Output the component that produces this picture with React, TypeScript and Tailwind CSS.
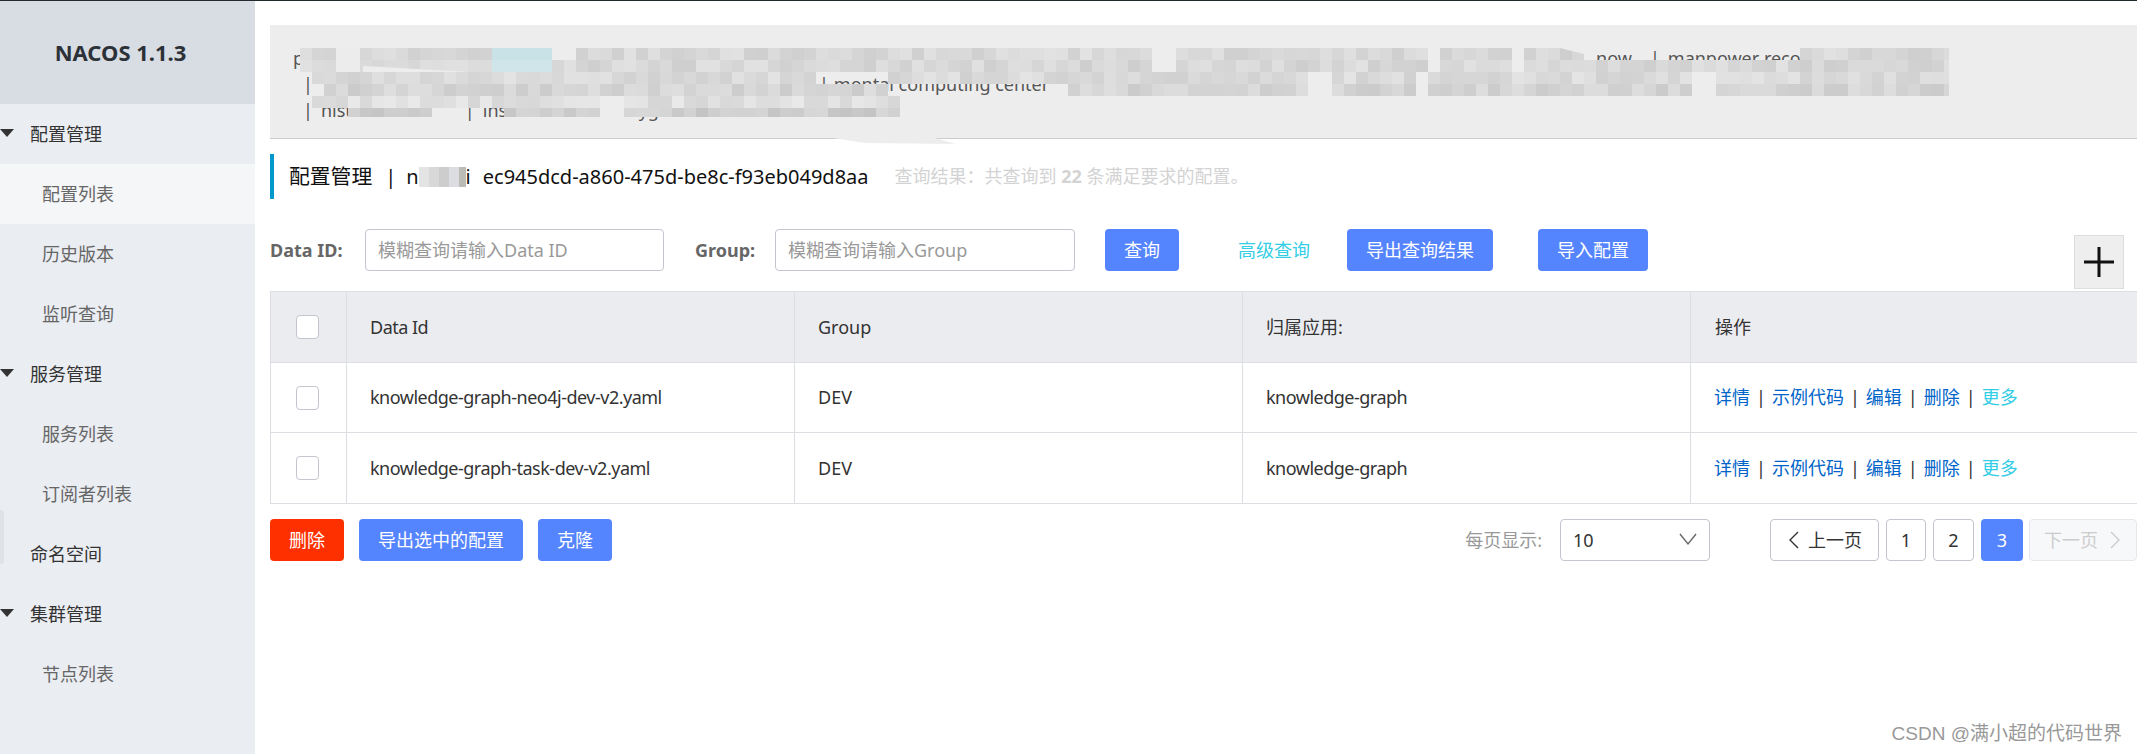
import React from "react";

const sideItems = [
  { label: "配置管理", group: true },
  { label: "配置列表", active: true },
  { label: "历史版本" },
  { label: "监听查询" },
  { label: "服务管理", group: true },
  { label: "服务列表" },
  { label: "订阅者列表" },
  { label: "命名空间", top: true },
  { label: "集群管理", group: true },
  { label: "节点列表" },
];

const rows = ["knowledge-graph-neo4j-dev-v2.yaml", "knowledge-graph-task-dev-v2.yaml"];

// redacted (pixelated) part of the notice banner, x in page coordinates
const bands = [
  { y: 48, h: 12, from: 300, to: 1949, gaps: [[552, 576], [1153, 1176], [1428, 1440], [1512, 1524], [1584, 1800]], base: 216 },
  { y: 60, h: 12, from: 300, to: 1949, gaps: [[1153, 1176], [1428, 1440], [1512, 1524]], base: 216 },
  { y: 72, h: 12, from: 312, to: 1949, gaps: [[815, 888], [1308, 1332], [1416, 1428], [1692, 1716]], base: 218 },
  { y: 84, h: 12, from: 324, to: 1949, gaps: [[888, 1068], [1308, 1332], [1416, 1428], [1692, 1716]], base: 212 },
  { y: 96, h: 12, from: 312, to: 900, gaps: [[600, 624]], base: 224 },
  { y: 108, h: 9, from: 348, to: 900, gaps: [[432, 504], [600, 624]], base: 206 },
];

function shade(x: number, y: number) {
  const n = Math.sin(x * 12.9898 + y * 78.233) * 43758.5453;
  return n - Math.floor(n);
}

function Mosaic() {
  const cells: React.ReactNode[] = [];
  bands.forEach((b) => {
    for (let x = b.from; x < b.to; x += 12) {
      if (b.gaps.some(([s, e]) => x + 6 > s && x + 6 < e)) continue;
      const v = Math.round(b.base - 10 + shade(x, b.y) * 20);
      let fill = `rgb(${v},${v},${v + 1})`;
      if (b.y < 72 && x >= 492 && x < 552) fill = b.y === 48 ? "#c8e2e8" : "#cfe5ea";
      if (b.y < 72 && x >= 336 && x < 360) fill = "#ececec";
      cells.push(<rect key={`${x}-${b.y}`} x={x} y={b.y} width={Math.min(12, b.to - x)} height={b.h} fill={fill} />);
    }
  });
  return (
    <svg
      aria-hidden
      viewBox="270 25 1867 114"
      className="absolute left-0 top-0 w-[1867px] h-[114px] overflow-visible"
    >
      {cells}
      <polygon points="363,66 470,72 363,72" fill="#ededed" />
      <polygon points="1560,48 1584,48 1584,54" fill="#ededed" />
      <polygon points="790,131 865,143 955,144 935,138" fill="#ededed" />
    </svg>
  );
}

function Btn({ children, className = "" }: { children: React.ReactNode; className?: string }) {
  return (
    <button className={`h-[42px] rounded-[4px] bg-[#5584ff] text-white text-[18px] ${className}`}>{children}</button>
  );
}

function Check() {
  return <span className="ml-[25px] block w-[23px] h-[24px] rounded-[4px] border border-[#c4c6cf] bg-white" />;
}

function Chevron({ dir, color = "#333333" }: { dir: "left" | "right" | "down"; color?: string }) {
  const pts = dir === "left" ? "11,1 3,9 11,17" : dir === "right" ? "3,1 11,9 3,17" : "1,3 9,13 17,3";
  return (
    <svg width={dir === "down" ? 18 : 14} height={18} viewBox={dir === "down" ? "0 0 18 18" : "0 0 14 18"} fill="none">
      <polyline points={pts} stroke={color} strokeWidth={1.4} />
    </svg>
  );
}

function Actions() {
  return (
    <span className="text-[#0064c8]">
      详情<span className="mx-[6px] text-[#333]">|</span>示例代码<span className="mx-[6px] text-[#333]">|</span>编辑
      <span className="mx-[6px] text-[#333]">|</span>删除<span className="mx-[6px] text-[#333]">|</span>
      <span className="text-[#33cde5]">更多</span>
    </span>
  );
}

export default function App() {
  return (
    <div className="relative flex h-[754px] overflow-hidden border-t border-[#222a2e] bg-white font-['Noto_Sans','Noto_Sans_CJK_SC',sans-serif] text-[18px] text-[#333]">
      <aside className="w-[255px] shrink-0 bg-[#eaedf2]">
        <div className="flex h-[103px] items-center justify-center bg-[#d8dce3] pr-[14px] text-[22px] font-bold text-[#2c3138]">
          NACOS 1.1.3
        </div>
        {sideItems.map((it) => (
          <div
            key={it.label}
            className={`relative flex h-[60px] items-center ${it.active ? "bg-[#f4f6f8]" : ""} ${
              it.group || it.top ? "pl-[30px] text-[#333]" : "pl-[42px] text-[#666]"
            }`}
          >
            {it.group && (
              <span className="absolute left-0 top-[25px] h-0 w-0 border-x-[7px] border-t-[8px] border-x-transparent border-t-[#333]" />
            )}
            {it.top && <span className="absolute left-0 top-[-14px] h-[54px] w-[4px] rounded-r-[4px] bg-[#dfe2e7]" />}
            {it.label}
          </div>
        ))}
      </aside>

      <main className="min-w-0 flex-1 pl-[15px]">
        <div className="relative mt-[24px] h-[114px] border-b border-[#cccccc] bg-[#ededed] pt-[20px] text-[#555] leading-[26px]">
          <div className="flex h-[26px] pl-[23px]">
            <span>p</span>
            <span className="ml-[1292px]">now</span>
            <span className="ml-[18px]">|</span>
            <span className="ml-[8px] whitespace-nowrap">manpower recovery</span>
          </div>
          <div className="flex h-[26px] pl-[33px]">
            <span>|</span>
            <span className="ml-[506px]">|</span>
            <span className="ml-[5px] whitespace-nowrap">montal computing center</span>
            <span className="ml-[28px]">|</span>
          </div>
          <div className="flex h-[26px] pl-[33px]">
            <span>|</span>
            <span className="ml-[8px]">nist</span>
            <span className="ml-[113px]">|</span>
            <span className="ml-[8px]">inst</span>
            <span className="ml-[125px]">yg</span>
          </div>
          <Mosaic />
        </div>

        <div className="mt-[15px] flex h-[45px] items-center border-l-4 border-[#0099cc] pl-[15px] text-[#111]">
          <span className="text-[20.8px]">配置管理</span>
          <span className="ml-[13px] text-[20px]">|</span>
          <span className="ml-[10px] inline-flex items-center text-[20px]">
            n
            <svg aria-hidden width={47} height={20}>
              <rect width={47} height={20} fill="#e4e4e4" />
              <rect x={10} width={10} height={20} fill="#d8d8d8" />
              <rect x={20} width={10} height={20} fill="#cdcdcd" />
              <rect x={30} width={10} height={20} fill="#dcdde0" />
              <rect x={40} width={7} height={20} fill="#bbbbb8" />
            </svg>
            i
          </span>
          <span className="ml-[12px] text-[20px]">ec945dcd-a860-475d-be8c-f93eb049d8aa</span>
          <span className="ml-[26px] text-[18px] text-[#d3d3d3]">
            查询结果：共查询到 <b className="font-bold">22</b> 条满足要求的配置。
          </span>
        </div>

        <div className="relative mt-[30px] flex h-[42px] items-center">
          <label className="w-[95px] font-bold text-[#666]">Data ID:</label>
          <input
            placeholder="模糊查询请输入Data ID"
            className="h-[42px] w-[299px] rounded-[4px] border border-[#c4c6cf] pl-[12px] placeholder:text-[#999]"
          />
          <label className="ml-[31px] w-[80px] font-bold text-[#666]">Group:</label>
          <input
            placeholder="模糊查询请输入Group"
            className="h-[42px] w-[300px] rounded-[4px] border border-[#c4c6cf] pl-[12px] placeholder:text-[#999]"
          />
          <Btn className="ml-[30px] w-[74px]">查询</Btn>
          <span className="ml-[59px] text-[#33cde5]">高级查询</span>
          <Btn className="ml-[37px] w-[146px]">导出查询结果</Btn>
          <Btn className="ml-[45px] w-[110px]">导入配置</Btn>
          <div className="absolute left-[1804px] top-[6px] flex h-[54px] w-[50px] items-center justify-center border border-[#dddddd] bg-[#eeeeee]">
            <svg aria-hidden width={30} height={30} viewBox="0 0 30 30">
              <path d="M15 0V30M0 15H30" stroke="#111" strokeWidth={3} />
            </svg>
          </div>
        </div>

        <table className="mt-[20px] w-[1867px] table-fixed border-collapse border-y border-l border-[#dcdee3]">
          <colgroup>
            <col className="w-[76px]" />
            <col className="w-[448px]" />
            <col className="w-[448px]" />
            <col className="w-[448px]" />
            <col className="w-[447px]" />
          </colgroup>
          <thead>
            <tr className="h-[71px] bg-[#ebecf0] text-left">
              <th className="border-r border-[#dcdee3]"><Check /></th>
              <th className="border-r border-[#dcdee3] pl-[23px] font-normal tracking-[-0.5px]">Data Id</th>
              <th className="border-r border-[#dcdee3] pl-[23px] font-normal">Group</th>
              <th className="border-r border-[#dcdee3] pl-[23px] font-normal">归属应用:</th>
              <th className="pl-[24px] font-normal">操作</th>
            </tr>
          </thead>
          <tbody>
            {rows.map((r, i) => (
              <tr key={r} className={`border-t border-[#dcdee3] ${i === 0 ? "h-[70px]" : "h-[71px]"}`}>
                <td className="border-r border-[#dcdee3]"><Check /></td>
                <td className="border-r border-[#dcdee3] pl-[23px] tracking-[-0.5px]">{r}</td>
                <td className="border-r border-[#dcdee3] pl-[23px]">DEV</td>
                <td className="border-r border-[#dcdee3] pl-[23px] tracking-[-0.5px]">knowledge-graph</td>
                <td className="pl-[23px]"><Actions /></td>
              </tr>
            ))}
          </tbody>
        </table>

        <div className="mt-[15px] flex h-[42px] items-center">
          <button className="h-[42px] w-[74px] rounded-[4px] bg-[#ff3000] text-white">删除</button>
          <Btn className="ml-[15px] w-[164px]">导出选中的配置</Btn>
          <Btn className="ml-[15px] w-[74px]">克隆</Btn>
          <span className="ml-auto text-[#999]">每页显示:</span>
          <div className="ml-[18px] flex h-[42px] w-[150px] items-center justify-between rounded-[4px] border border-[#c4c6cf] pl-[12px] pr-[12px]">
            10
            <Chevron dir="down" color="#666666" />
          </div>
          <button className="ml-[60px] flex h-[42px] w-[109px] items-center justify-center gap-[7px] rounded-[4px] border border-[#c4c6cf]">
            <Chevron dir="left" />
            上一页
          </button>
          <button className="ml-[7px] h-[42px] w-[40px] rounded-[4px] border border-[#c4c6cf]">1</button>
          <button className="ml-[7px] h-[42px] w-[41px] rounded-[4px] border border-[#c4c6cf]">2</button>
          <button className="ml-[7px] h-[42px] w-[42px] rounded-[4px] bg-[#5584ff] text-white">3</button>
          <button className="ml-[6px] flex h-[42px] w-[108px] items-center justify-center gap-[10px] rounded-[4px] border border-[#e6e7eb] bg-[#f7f8fa] text-[#cccccc]">
            下一页
            <Chevron dir="right" color="#cccccc" />
          </button>
        </div>
      </main>

      <span className="absolute right-[15px] bottom-[6px] font-['Liberation_Sans','Noto_Sans_CJK_SC',sans-serif] text-[19px] text-[#999]">
        CSDN @满小超的代码世界
      </span>
    </div>
  );
}
